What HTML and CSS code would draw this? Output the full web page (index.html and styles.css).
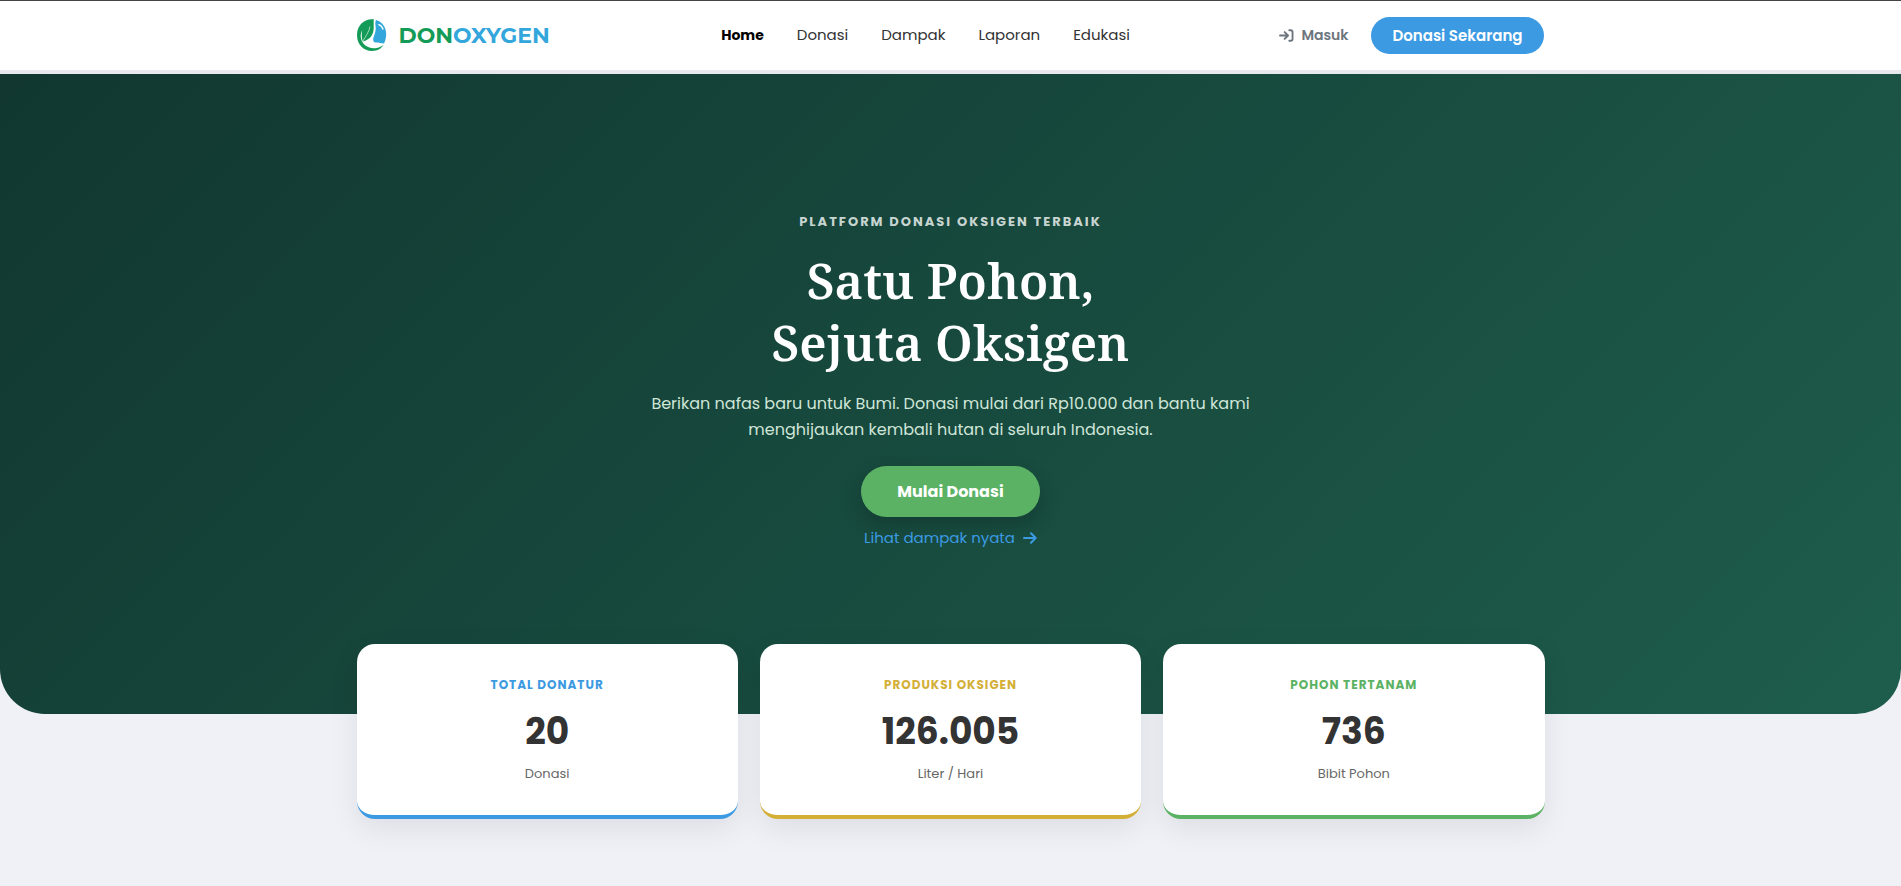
FILE: index.html
```html
<!DOCTYPE html>
<html lang="id">
<head>
<meta charset="utf-8">
<meta name="viewport" content="width=device-width, initial-scale=1">
<title>Donoxygen</title>
<link rel="stylesheet" href="styles.css">
</head>
<body>
<header class="site-header">
  <div class="container header-row">
    <a class="brand" href="#">
      <svg class="brand-mark" viewBox="0 0 30 32" aria-hidden="true">
        <path fill="#139b57" d="M17 .3C7 -.8 0 6.500 0 16c0 9.500 6.500 16 15 16 5.500 0 9.500-2.400 11.600-6.200-3 2.600-6.200 3.600-9.600 3.400C9.500 29 4.300 24.500 3.700 17.500c0-2.300.4-4.200 1.500-6.200C4.400 15.400 4.500 19 5.800 22.500 13 20.500 16.600 16 16.700 9c.1-3.600-.4-6.300.3-8.700z"/>
        <path fill="none" stroke="#fff" stroke-width=".6" d="M5.600 22.500C9 17 12.400 12 13 7.500"/>
        <path fill="#33a7dc" d="M19 .9c5.800 1.600 10 6.800 10.200 13.600 0 3.800-.7 7.200-2.200 10-2.600-.4-6.200-1.200-8.800-1-1.700-.2-2.400-2.400-1.900-4.500 1.800-4.500 3-8.500 2.200-12.500-.3-2-.2-3.800.5-5.600z"/>
        <path fill="none" stroke="#fff" stroke-width="1.300" stroke-linecap="round" d="M21.800 5.600c2.300.8 3.500 2.400 4.200 4.600"/>
      </svg>
      <span class="brand-name">DON<span class="brand-blue">OXYGEN</span></span>
    </a>
    <nav class="main-nav">
      <a class="active" href="#">Home</a>
      <a href="#">Donasi</a>
      <a href="#">Dampak</a>
      <a href="#">Laporan</a>
      <a href="#">Edukasi</a>
    </nav>
    <div class="actions">
      <a class="login" href="#">
        <svg class="login-icon" viewBox="0 0 16 14" aria-hidden="true"><path d="M1 7h8.500M6 3.300 9.700 7 6 10.700M11 1.300h1.500a2 2 0 0 1 2 2v7.400a2 2 0 0 1-2 2H11"/></svg>
        Masuk
      </a>
      <button class="btn btn-blue" type="button">Donasi Sekarang</button>
    </div>
  </div>
</header>
<main>
  <section class="hero">
    <p class="eyebrow">PLATFORM DONASI OKSIGEN TERBAIK</p>
    <h1>Satu Pohon,<br>Sejuta Oksigen</h1>
    <p class="lead">Berikan nafas baru untuk Bumi. Donasi mulai dari Rp10.000 dan bantu kami<br>menghijaukan kembali hutan di seluruh Indonesia.</p>
    <button class="btn btn-green" type="button">Mulai Donasi</button>
    <a class="impact-link" href="#">Lihat dampak nyata
      <svg class="arrow-icon" viewBox="0 0 14 14" aria-hidden="true"><path d="M1 7h11.500M8 2.300 12.700 7 8 11.700"/></svg>
    </a>
  </section>
  <section class="container stats">
    <article class="card blue">
      <h2>TOTAL DONATUR</h2>
      <p class="value">20</p>
      <p class="unit">Donasi</p>
    </article>
    <article class="card gold">
      <h2>PRODUKSI OKSIGEN</h2>
      <p class="value">126.005</p>
      <p class="unit">Liter / Hari</p>
    </article>
    <article class="card green">
      <h2>POHON TERTANAM</h2>
      <p class="value">736</p>
      <p class="unit">Bibit Pohon</p>
    </article>
  </section>
</main>
</body>
</html>
```

FILE: styles.css
```css
* { box-sizing: border-box; }
body {
  margin: 0;
  background: #f0f1f6;
  color: #333;
  font-family: Poppins, Inter, sans-serif;
}
h1, h2, p { margin: 0; }
a { color: inherit; text-decoration: none; }
main { padding-bottom: 67px; }
.container { max-width: 1188px; margin: 0 auto; }

.site-header {
  background: #fff;
  border-top: 1px solid #444;
  border-bottom: 4px solid #e8e9ee;
}
.header-row {
  display: flex;
  justify-content: space-between;
  align-items: center;
  height: 69px;
}
.brand { display: flex; align-items: center; gap: 12px; padding: 0 22px 1px 0; }
.brand-mark { width: 30px; height: 32px; }
.brand-name {
  font-family: Montserrat, Inter, sans-serif;
  font-size: 22px;
  font-weight: 700;
  color: #139b57;
}
.brand-blue { color: #33a7dc; }
.main-nav { display: flex; gap: 33px; font-size: 15px; line-height: 20px; padding-bottom: 2px; }
.main-nav .active { color: #000; font-size: 14px; font-weight: 700; }
.actions { display: flex; justify-content: flex-end; align-items: center; gap: 22px; }
.login {
  display: flex;
  align-items: center;
  gap: 7px;
  color: #6c757d;
  font-size: 14px;
  font-weight: 600;
}
.login-icon { width: 15px; height: 13px; }
.login-icon path, .arrow-icon path {
  fill: none;
  stroke: currentColor;
  stroke-width: 2;
  stroke-linecap: round;
  stroke-linejoin: round;
}
.btn {
  border: 0;
  border-radius: 50px;
  color: #fff;
  font-family: inherit;
  font-weight: 700;
  cursor: pointer;
}
.btn-blue { padding: 0 22px; font-size: 15px; font-weight: 600; line-height: 37px; background: #3c9ae3; }

.hero {
  display: flex;
  flex-direction: column;
  align-items: center;
  min-height: 640px;
  padding: 138px 20px 70px;
  border-radius: 0 0 45px 45px;
  background: linear-gradient(135deg, #113730 0%, #1e5d4c 100%);
  text-align: center;
}
.eyebrow {
  color: #c7d5d1;
  font-size: 13px;
  font-weight: 700;
  line-height: 20px;
  letter-spacing: 2px;
}
h1 {
  margin-top: 17px;
  color: #fff;
  font-family: "Noto Serif", "Liberation Serif", serif;
  font-size: 49px;
  font-weight: 600;
  line-height: 62px;
}
.lead { margin-top: 18px; color: #cfe5d8; font-size: 16px; line-height: 26px; }
.btn-green {
  margin-top: 23px;
  padding: 0 36px;
  font-size: 16px;
  line-height: 51px;
  background: #5bb264;
  box-shadow: 0 8px 20px rgba(0, 0, 0, .2);
}
.impact-link {
  display: flex;
  align-items: center;
  gap: 8px;
  margin-top: 10px;
  color: #3c9ae3;
  font-size: 15px;
  line-height: 22px;
}
.arrow-icon { width: 14px; height: 14px; }

.stats {
  display: grid;
  grid-template-columns: repeat(3, 1fr);
  gap: 22px;
  margin-top: -70px;
}
.card {
  padding: 31px 20px 31px;
  border-bottom: 4px solid;
  border-radius: 18px;
  background: #fff;
  box-shadow: 0 10px 30px rgba(0, 0, 0, .08);
  text-align: center;
}
.card h2 { font-size: 12px; line-height: 20px; letter-spacing: 1px; }
.value { margin-top: 12px; color: #333; font-size: 36px; font-weight: 700; line-height: 49px; }
.unit { margin-top: 8px; color: #666; font-size: 13px; line-height: 20px; }
.blue { border-color: #3c9ae3; }
.blue h2 { color: #3c9ae3; }
.gold { border-color: #d4af37; }
.gold h2 { color: #d4af37; }
.green { border-color: #5bb264; }
.green h2 { color: #5bb264; }
```
